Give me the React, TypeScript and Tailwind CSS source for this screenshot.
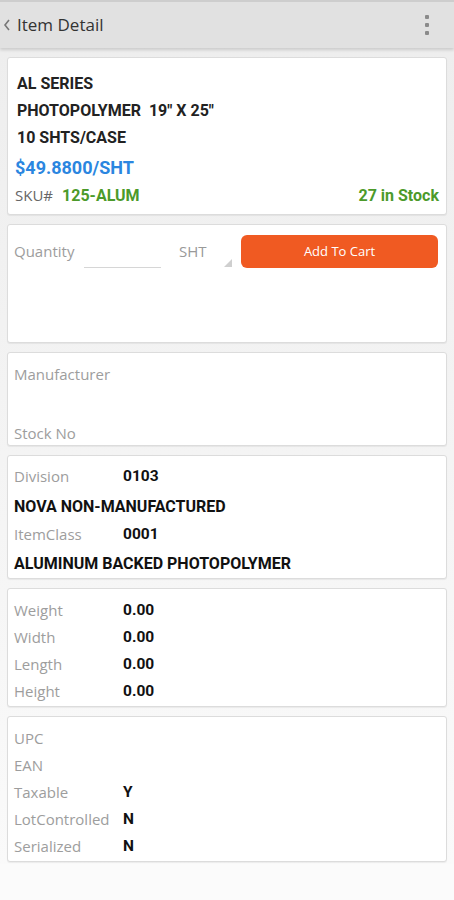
import React from 'react';

const label = "font-['Open_Sans',sans-serif] text-[15px] text-[#9d9d9d]";
const value = "font-['Roboto',sans-serif] font-bold text-[15.5px] text-[#111]";
const caps = "font-['Roboto',sans-serif] font-bold text-[16px] text-[#111]";

const Card = ({ className, children }: { className?: string; children: React.ReactNode }) => (
  <div className={`mx-[7px] bg-white border border-[#dcdcdc] rounded-[3px] shadow-[0_1px_1px_rgba(0,0,0,0.06)] ${className ?? ''}`}>
    {children}
  </div>
);

const Row = ({ name, val }: { name: string; val?: string }) => (
  <div className="flex items-center h-[27px] px-[6px]">
    <span className={`${label} w-[109px] shrink-0`}>{name}</span>
    {val && <span className={value}>{val}</span>}
  </div>
);

export default function App() {
  return (
    <div className="w-[454px] min-h-[900px] bg-[#fbfbfb]">
      <div className="h-[48px] bg-[#e1e1e1] border-t-[2px] border-[#cdcdcd] shadow-[0_2px_3px_rgba(0,0,0,0.15)] flex items-center relative z-10">
        <svg width="14" height="14" viewBox="0 0 14 14" className="ml-[1px]">
          <polyline points="8,2 4,7 8,12" fill="none" stroke="#777" strokeWidth="1.6" />
        </svg>
        <span className="font-['Open_Sans',sans-serif] text-[17px] text-[#333] ml-[2px]">Item Detail</span>
        <div className="ml-auto mr-[25px] flex flex-col gap-[4px]">
          <span className="w-[4px] h-[4px] bg-[#8a8a8a] rounded-[1px]" />
          <span className="w-[4px] h-[4px] bg-[#8a8a8a] rounded-[1px]" />
          <span className="w-[4px] h-[4px] bg-[#8a8a8a] rounded-[1px]" />
        </div>
      </div>

      <div className="bg-linear-to-b from-[#eeeeee] to-[#fafafa] pt-[9px] pb-[2px] flex flex-col gap-[9px]">
        <Card className="pt-[12px] pb-[4px] px-[9px]">
          <div className="font-['Roboto',sans-serif] font-bold text-[16px] text-[#222]">
            <div className="h-[27px] leading-[27px]">AL SERIES</div>
            <div className="h-[27px] leading-[27px] whitespace-pre">PHOTOPOLYMER  19" X 25"</div>
            <div className="h-[27px] leading-[27px]">10 SHTS/CASE</div>
          </div>
          <div className="h-[30px] leading-[33px] font-['Roboto',sans-serif] font-bold text-[18px] text-[#2b86e0] -ml-[2px]">
            $49.8800/SHT
          </div>
          <div className="h-[29px] flex items-center justify-between -ml-[2px] -mr-[2px]">
            <div className="flex items-center">
              <span className="font-['Open_Sans',sans-serif] text-[15px] text-[#666] mr-[9px]">SKU#</span>
              <span className="font-['Roboto',sans-serif] font-bold text-[16px] text-[#4c9a2a]">125-ALUM</span>
            </div>
            <span className="font-['Roboto',sans-serif] font-bold text-[16px] text-[#4c9a2a]">27 in Stock</span>
          </div>
        </Card>

        <Card className="h-[119px] pt-[10px] pl-[6px] pr-[8px]">
          <div className="flex items-center h-[33px]">
            <span className={`${label} w-[70px]`}>Quantity</span>
            <div className="w-[77px] h-[26px] border-b border-[#d6d6d6] mt-[6px]" />
            <div className="relative w-[62px] h-[26px] ml-[9px] mt-[6px] flex items-center">
              <span className="font-['Open_Sans',sans-serif] text-[15px] text-[#999] ml-[9px] -mt-[6px]">SHT</span>
              <svg width="8" height="8" viewBox="0 0 8 8" className="absolute right-0 bottom-[1px]">
                <polygon points="8,0 8,8 0,8" fill="#cfcfcf" />
              </svg>
            </div>
            <button className="ml-auto w-[197px] h-[33px] rounded-[6px] bg-[#f05a22] text-white font-['Open_Sans',sans-serif] text-[13px]">
              Add To Cart
            </button>
          </div>
        </Card>

        <Card className="h-[94px] pt-[8px]">
          <Row name="Manufacturer" />
          <div className="h-[32px]" />
          <Row name="Stock No" />
        </Card>

        <Card className="pt-[7px] pb-[1px]">
          <Row name="Division" val="0103" />
          <div className="h-[31px] flex items-center px-[6px] pt-[2px]">
            <span className={caps}>NOVA NON-MANUFACTURED</span>
          </div>
          <Row name="ItemClass" val="0001" />
          <div className="h-[29px] flex items-center px-[6px] pt-[2px]">
            <span className={caps}>ALUMINUM BACKED PHOTOPOLYMER</span>
          </div>
        </Card>

        <Card className="pt-[8px] pb-[1px]">
          <Row name="Weight" val="0.00" />
          <Row name="Width" val="0.00" />
          <Row name="Length" val="0.00" />
          <Row name="Height" val="0.00" />
        </Card>

        <Card className="pt-[8px] pb-[1px]">
          <Row name="UPC" />
          <Row name="EAN" />
          <Row name="Taxable" val="Y" />
          <Row name="LotControlled" val="N" />
          <Row name="Serialized" val="N" />
        </Card>
      </div>
    </div>
  );
}
